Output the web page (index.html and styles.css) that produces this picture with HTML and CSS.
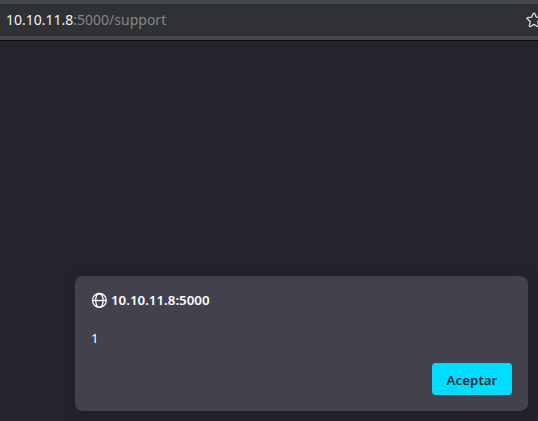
FILE: index.html
```html
<!DOCTYPE html>
<html lang="es">
<head>
<meta charset="utf-8">
<title>10.10.11.8:5000/support</title>
<link rel="stylesheet" href="styles.css">
</head>
<body>
<header class="toolbar">
  <div class="urlbar">
    <div class="url"><span class="host">10.10.11.8</span>:5000/support</div>
    <svg class="star" viewBox="0 0 16 16" aria-hidden="true"><path d="M8 1.1Q8.5 1.1 8.8 1.7L10.4 5.2 14.3 5.7Q15.4 6 14.7 6.8L11.8 9.5 12.6 13.7Q12.6 15 11.5 14.5L8 12.4 4.5 14.5Q3.4 15 3.4 13.7L4.2 9.5 1.3 6.8Q.6 6 1.7 5.7L5.6 5.2 7.2 1.7Q7.5 1.1 8 1.1Z"/></svg>
  </div>
</header>
<main class="page">
  <section class="dialog" role="alertdialog">
    <div class="title">
      <svg class="globe" viewBox="0 0 16 16" aria-hidden="true"><circle cx="8.4" cy="8.4" r="6.9"/><ellipse cx="8.4" cy="8.4" rx="3.7" ry="6.9"/><path d="M1.5 8.5h13.8"/></svg>
      <span>10.10.11.8:5000</span>
    </div>
    <p class="message">1</p>
    <div class="actions"><button class="accept">Aceptar</button></div>
  </section>
</main>
</body>
</html>
```
FILE: styles.css
```css
* { box-sizing: border-box; }

body {
  margin: 0;
  height: 421px;
  display: flex;
  flex-direction: column;
  overflow: hidden;
  background: #25232d;
  color: #fbfbfe;
  font-family: "Noto Sans", sans-serif;
}

.toolbar {
  flex: none;
  height: 41px;
  padding: 4px 0;
  background: #44474c;
  border-bottom: 1px solid #0d0d12;
}

.urlbar {
  height: 32px;
  padding-left: 6px;
  display: flex;
  align-items: center;
  justify-content: space-between;
  overflow: hidden;
  background: #303135;
}

.url {
  font-size: 14px;
  line-height: 20px;
  color: #85868a;
}

.host { color: #f3f3f4; }

.star {
  flex: none;
  width: 16px;
  height: 16px;
  margin-right: -4px;
  fill: none;
  stroke: #dededf;
  stroke-width: 1.3;
  stroke-linejoin: round;
}

.page {
  flex: 1;
  display: flex;
  align-items: flex-end;
  justify-content: flex-end;
  padding: 0 10px 10px 0;
}

.dialog {
  width: 453px;
  height: 135px;
  padding: 16px;
  display: flex;
  flex-direction: column;
  background: #44414e;
  border-radius: 8px;
  box-shadow: 0 2px 12px rgba(22, 22, 25, 0.35);
}

.title {
  height: 16px;
  display: flex;
  align-items: center;
  gap: 4px;
  font-size: 13.33px;
  font-weight: 600;
}

.globe {
  width: 16px;
  height: 16px;
  overflow: visible;
  fill: none;
  stroke: #fbfbfe;
  stroke-width: 1.3;
}

.message {
  margin: 21px 0 0;
  font-size: 13.33px;
  line-height: 18px;
}

.actions {
  margin-top: auto;
  display: flex;
  justify-content: flex-end;
}

.accept {
  width: 80px;
  height: 32px;
  padding: 2px 0 0;
  border: 0;
  border-radius: 4px;
  background: #00ddff;
  color: #2b2a33;
  font: 600 13.33px/18px "Noto Sans", sans-serif;
}
```
